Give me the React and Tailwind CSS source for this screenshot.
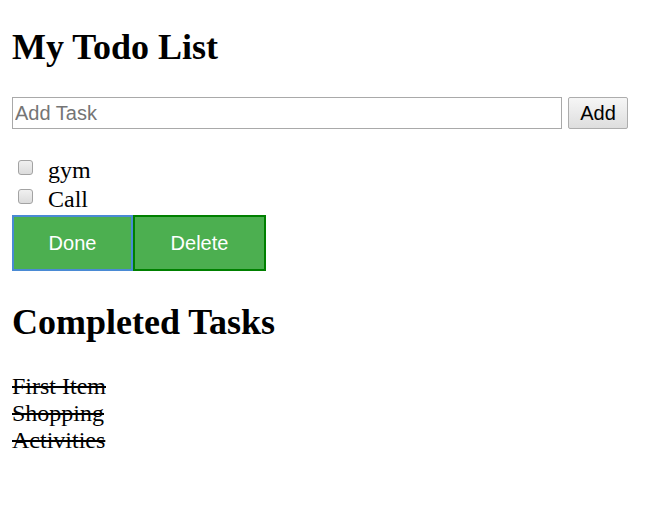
import React from "react";

const serif = { fontFamily: '"Liberation Serif", "Times New Roman", serif' };
const sans = { fontFamily: '"Liberation Sans", Arial, sans-serif' };

export default function App() {
  return (
    <div className="min-h-[506px] bg-white px-3 pt-[26px] text-black" style={serif}>
      <h1 className="text-[36px] font-bold leading-[normal]">My Todo List</h1>

      <div className="mt-[29px] flex items-center" style={sans}>
        <input
          type="text"
          placeholder="Add Task"
          className="h-[32px] w-[550px] border border-[#a9a9a9] px-[2px] text-[20px] text-black outline-none placeholder:text-[#757575]"
        />
        <button className="ml-[6px] h-[32px] w-[60px] rounded-[2px] border border-[#adadad] bg-gradient-to-b from-[#f6f6f6] to-[#dedede] text-[20px] text-black">
          Add
        </button>
      </div>

      <ul className="mt-[28px]">
        {["gym", "Call"].map((t) => (
          <li key={t} className="flex h-[29px] items-start">
            <span className="ml-[6px] mt-[3px] h-[15px] w-[15px] rounded-[3px] border border-[#a3a3a3] bg-gradient-to-b from-[#f0f0f0] to-[#dcdcdc]" />
            <span className="ml-[15px] text-[24px] leading-[normal]">{t}</span>
          </li>
        ))}
      </ul>

      <div className="flex" style={sans}>
        <button className="h-[56px] w-[121px] border-2 border-[#4a8ad4] bg-[#4caf50] text-[20px] text-white">
          Done
        </button>
        <button className="h-[56px] w-[133px] border-2 border-[#008000] bg-[#4caf50] text-[20px] text-white">
          Delete
        </button>
      </div>

      <h2 className="mt-[30px] text-[36px] font-bold leading-[normal]">Completed Tasks</h2>

      <ul className="mt-[30px] text-[24px] leading-[normal] line-through">
        <li>First Item</li>
        <li>Shopping</li>
        <li>Activities</li>
      </ul>
    </div>
  );
}
